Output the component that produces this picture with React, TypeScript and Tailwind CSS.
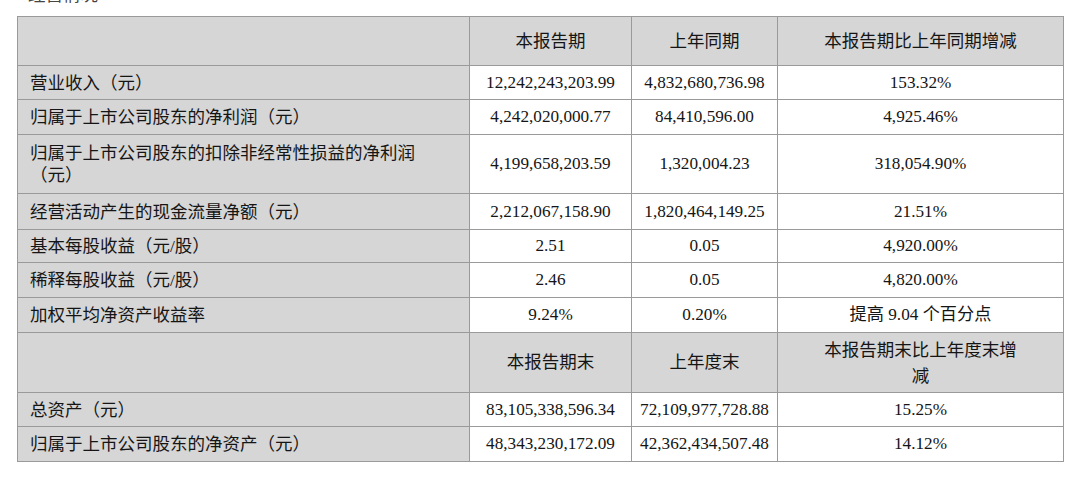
const rows1 = [
  { label: '营业收入（元）', a: '12,242,243,203.99', b: '4,832,680,736.98', c: '153.32%', h: 'h-[34px]' },
  { label: '归属于上市公司股东的净利润（元）', a: '4,242,020,000.77', b: '84,410,596.00', c: '4,925.46%', h: 'h-[35px]' },
  { label: '归属于上市公司股东的扣除非经常性损益的净利润', label2: '（元）', a: '4,199,658,203.59', b: '1,320,004.23', c: '318,054.90%', h: 'h-[59px]' },
  { label: '经营活动产生的现金流量净额（元）', a: '2,212,067,158.90', b: '1,820,464,149.25', c: '21.51%', h: 'h-[36px]' },
  { label: '基本每股收益（元/股）', a: '2.51', b: '0.05', c: '4,920.00%', h: 'h-[33px]' },
  { label: '稀释每股收益（元/股）', a: '2.46', b: '0.05', c: '4,820.00%', h: 'h-[35px]' },
  { label: '加权平均净资产收益率', a: '9.24%', b: '0.20%', c: '提高 9.04 个百分点', h: 'h-[35px]' },
];

const rows2 = [
  { label: '总资产（元）', a: '83,105,338,596.34', b: '72,109,977,728.88', c: '15.25%', h: 'h-[34px]' },
  { label: '归属于上市公司股东的净资产（元）', a: '48,343,230,172.09', b: '42,362,434,507.48', c: '14.12%', h: 'h-[35px]' },
];

const cell = 'border border-[#9a9a9a] text-center align-middle p-0';
const labelCell = 'border border-[#9a9a9a] bg-[#d6d6d6] text-left align-middle pl-[12px] pr-2 text-[17.5px] leading-[22px]';

function DataRow({ r }: { r: (typeof rows1)[number] }) {
  return (
    <tr className={r.h}>
      <td className={labelCell}>
        {r.label}
        {r.label2 && (
          <>
            <br />
            {r.label2}
          </>
        )}
      </td>
      <td className={`${cell} bg-white text-[17.2px]`}>{r.a}</td>
      <td className={`${cell} bg-white text-[17.2px]`}>{r.b}</td>
      <td className={`${cell} bg-white text-[17.2px]`}>{r.c}</td>
    </tr>
  );
}

export default function App() {
  return (
    <div
      className="w-[1080px] h-[481px] bg-white overflow-hidden text-[#151515]"
      style={{ fontFamily: '"Liberation Serif", "Noto Sans CJK SC", serif' }}
    >
      <div className="h-[16px] overflow-hidden">
        <div className="pl-[28px] text-[17.5px] leading-[22px] -mt-[16px] text-[#444]">经营情况</div>
      </div>
      <div className="pl-[17px]">
        <table className="table-fixed border-collapse w-[1046px]">
          <colgroup>
            <col className="w-[452px]" />
            <col className="w-[162px]" />
            <col className="w-[146px]" />
            <col className="w-[286px]" />
          </colgroup>
          <tbody>
            <tr className="h-[49px] bg-[#d6d6d6]">
              <td className={cell}></td>
              <td className={`${cell} text-[17.5px]`}>本报告期</td>
              <td className={`${cell} text-[17.5px]`}>上年同期</td>
              <td className={`${cell} text-[17.5px]`}>本报告期比上年同期增减</td>
            </tr>
            {rows1.map((r) => (
              <DataRow key={r.label} r={r} />
            ))}
            <tr className="h-[60px] bg-[#d6d6d6]">
              <td className={cell}></td>
              <td className={`${cell} text-[17.5px]`}>本报告期末</td>
              <td className={`${cell} text-[17.5px]`}>上年度末</td>
              <td className={`${cell} text-[17.5px] leading-[26px]`}>
                本报告期末比上年度末增
                <br />
                减
              </td>
            </tr>
            {rows2.map((r) => (
              <DataRow key={r.label} r={r} />
            ))}
          </tbody>
        </table>
      </div>
    </div>
  );
}
